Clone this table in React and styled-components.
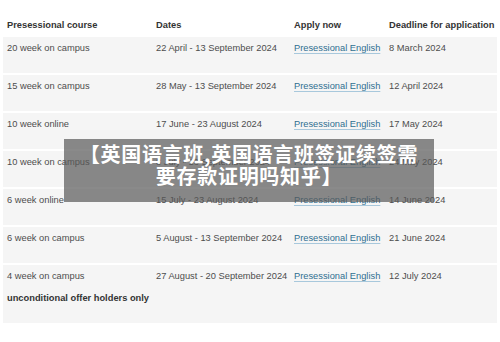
import React from 'react'
import styled, { createGlobalStyle } from 'styled-components'

const GlobalStyle = createGlobalStyle`
    html, body {
        margin: 0;
        padding: 0;
        background: #ffffff;
    }
    body {
        font-family: "Liberation Sans", Arial, sans-serif;
    }
`

const Page = styled.div`
    position: relative;
    width: 500px;
    height: 342px;
    overflow: hidden;
    padding: 13px 3px 0;
    box-sizing: border-box;
`
const Table = styled.table`
    width: 494px;
    table-layout: fixed;
    border-collapse: separate;
    border-spacing: 0 2px;
    font-size: 9.3px;
    line-height: 11px;
`
const HeadCell = styled.th`
    width: ${p => p.w ? `${p.w}px` : 'auto'};
    text-align: left;
    font-weight: bold;
    color: #333333;
    padding: 0 4px;
    height: 20px;
    vertical-align: middle;
    white-space: nowrap;
`
const Row = styled.tr`
    background: #f5f5f5;
`
const Cell = styled.td`
    padding: 6px 4px 0;
    height: ${p => p.tall ? 'auto' : '30px'};
    padding-bottom: ${p => p.tall ? '19px' : '0'};
    vertical-align: top;
    color: #4d4d4d;
    white-space: nowrap;
`
const Note = styled.div`
    margin-top: 11px;
    font-weight: bold;
    color: #333333;
`
const ApplyLink = styled.a`
    color: #2f6f91;
    text-decoration: underline;
    text-decoration-color: #a8c8dc;
    text-underline-offset: 2px;
    cursor: pointer;
`
const Overlay = styled.div`
    position: absolute;
    left: 64px;
    top: 139px;
    width: 370px;
    height: 63px;
    background: rgba(88, 88, 88, 0.7);
    display: flex;
    align-items: center;
    justify-content: center;
    padding-bottom: 12px;
    box-sizing: border-box;
`
const OverlayTitle = styled.div`
    font-family: "Noto Sans CJK SC", "Noto Sans", sans-serif;
    font-weight: bold;
    font-size: 20px;
    line-height: 22px;
    letter-spacing: 0.7px;
    color: #ffffff;
    text-align: center;
    white-space: nowrap;
`

const courses = [
    { course: '20 week on campus', dates: '22 April - 13 September 2024', deadline: '8 March 2024' },
    { course: '15 week on campus', dates: '28 May - 13 September 2024', deadline: '12 April 2024' },
    { course: '10 week online', dates: '17 June - 23 August 2024', deadline: '17 May 2024' },
    { course: '10 week on campus', dates: '8 July - 13 September 2024', deadline: '24 May 2024' },
    { course: '6 week online', dates: '15 July - 23 August 2024', deadline: '14 June 2024' },
    { course: '6 week on campus', dates: '5 August - 13 September 2024', deadline: '21 June 2024' },
    { course: '4 week on campus', dates: '27 August - 20 September 2024', deadline: '12 July 2024', note: 'unconditional offer holders only' },
]

const App = () => {
    return (
        <>
            <GlobalStyle />
            <Page>
                <Table>
                    <thead>
                        <tr>
                            <HeadCell w={141}>Presessional course</HeadCell>
                            <HeadCell w={130}>Dates</HeadCell>
                            <HeadCell w={87}>Apply now</HeadCell>
                            <HeadCell>Deadline for application</HeadCell>
                        </tr>
                    </thead>
                    <tbody>
                        {courses.map(item => {
                            const tall = !!item.note
                            return (
                                <Row key={item.course}>
                                    <Cell tall={tall}>
                                        {item.course}
                                        {item.note && <Note>{item.note}</Note>}
                                    </Cell>
                                    <Cell tall={tall}>{item.dates}</Cell>
                                    <Cell tall={tall}>
                                        <ApplyLink>Presessional English</ApplyLink>
                                    </Cell>
                                    <Cell tall={tall}>{item.deadline}</Cell>
                                </Row>
                            )
                        })}
                    </tbody>
                </Table>
                <Overlay>
                    <OverlayTitle>
                        【英国语言班,英国语言班签证续签需<br />要存款证明吗知乎】
                    </OverlayTitle>
                </Overlay>
            </Page>
        </>
    )
}

export default App
